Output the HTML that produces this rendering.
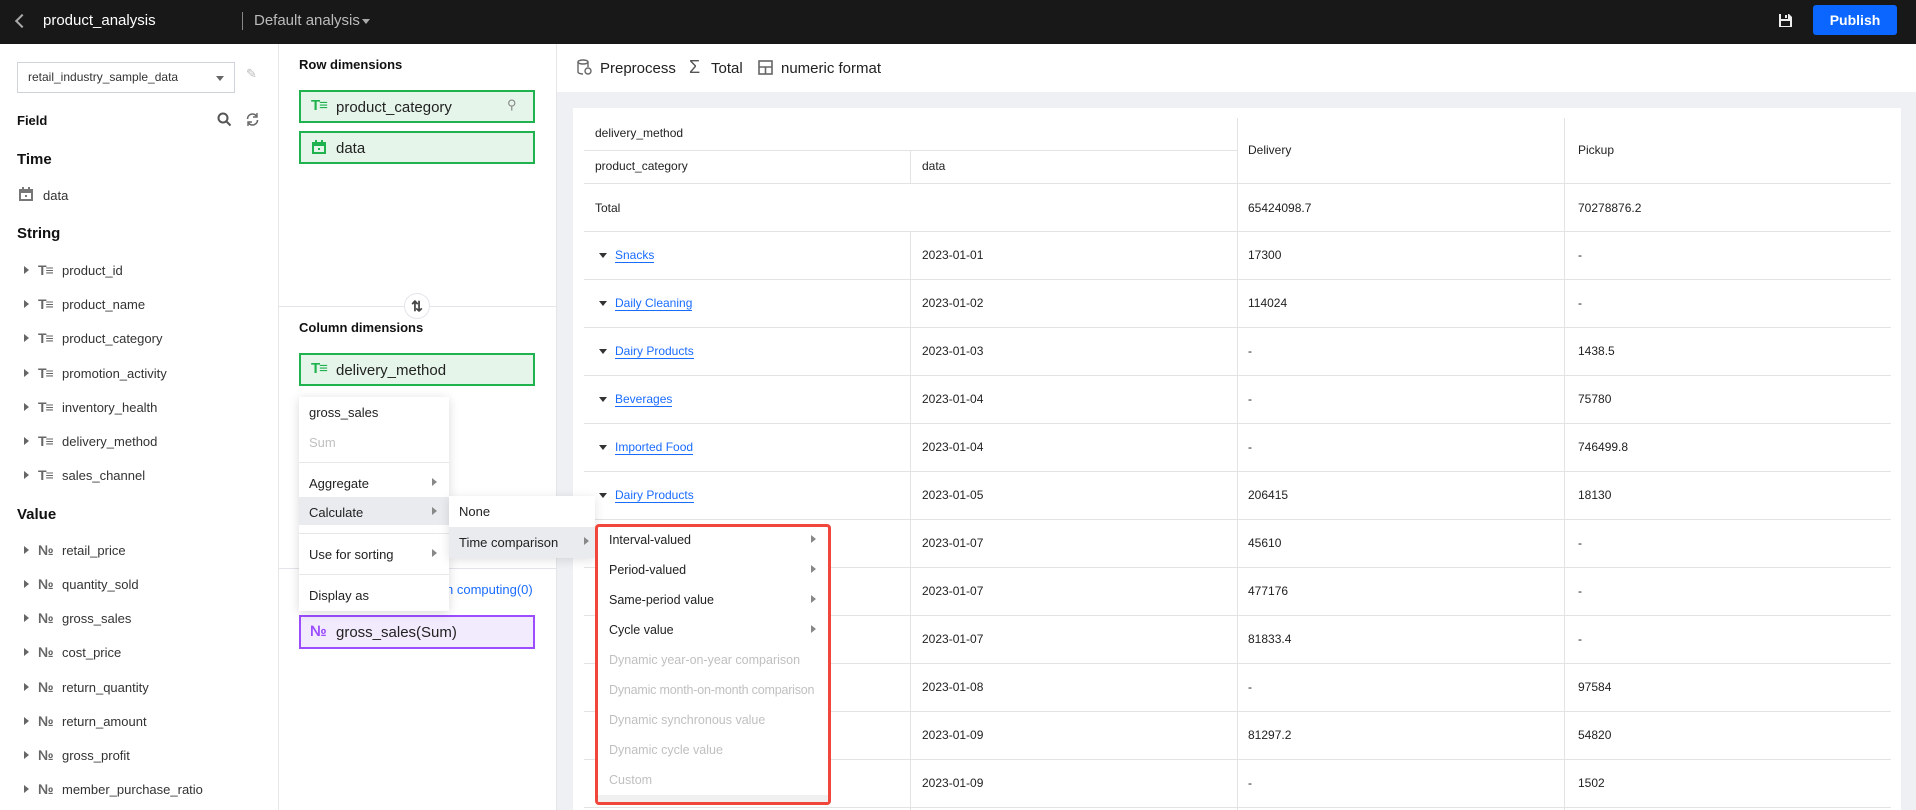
<!DOCTYPE html>
<html><head><meta charset="utf-8"><style>
*{box-sizing:border-box;margin:0;padding:0}
body{width:1916px;height:810px;overflow:hidden;background:#fff;font-family:"Liberation Sans",sans-serif;font-size:13px;color:#222;position:relative}
.a{position:absolute;white-space:nowrap}
.top{left:0;top:0;width:1916px;height:44px;background:#181818}
.h{font-weight:bold;font-size:15px;color:#111}
.fi{font-size:13px;color:#333}
.tri{display:block;width:0;height:0;border-left:5px solid #666;border-top:4px solid transparent;border-bottom:4px solid transparent}
.dn{display:block;width:0;height:0;border-top:5px solid #333;border-left:4px solid transparent;border-right:4px solid transparent}
.ti{font-weight:bold;color:#666;font-size:14px;letter-spacing:-1px}
.no{color:#666;font-size:14px;font-weight:bold}
.gbox{background:#e5f5ea;border:2px solid #1fb24f;height:33px}
.lnk{color:#1a6cff;border-bottom:1px solid #1a6cff;line-height:14px}
.mi{font-size:13px;color:#222}
.rb .mi{font-size:12.5px}
.dis{color:#c0c0c0}
.arr{display:block;width:0;height:0;border-left:5px solid #888;border-top:4px solid transparent;border-bottom:4px solid transparent}
</style></head><body>
<div class="a top"></div>
<div class="a" style="left:17px;top:16px;width:10px;height:10px;border-left:2px solid #aaa;border-bottom:2px solid #aaa;transform:rotate(45deg)"></div>
<div class="a" style="left:43px;top:12px;color:#fff;font-size:15px">product_analysis</div>
<div class="a" style="left:242px;top:12px;width:1px;height:18px;background:#888"></div>
<div class="a" style="left:254px;top:12px;color:#bbb;font-size:15px">Default analysis</div>
<div class="a" style="left:362px;top:19px;border-top:5px solid #aaa;border-left:4px solid transparent;border-right:4px solid transparent"></div>
<svg class="a" style="left:1778px;top:13px" width="15" height="15" viewBox="0 0 15 15"><path d="M1 1h10l3 3v10H1z" fill="#eee"/><rect x="3" y="1" width="7" height="5" fill="#181818"/><rect x="7" y="2" width="2" height="3" fill="#eee"/><rect x="3" y="8" width="9" height="5" fill="#181818"/></svg>
<div class="a" style="left:1813px;top:5px;width:84px;height:30px;background:#0a66ff;border-radius:3px;color:#fff;font-weight:bold;font-size:14px;text-align:center;line-height:30px">Publish</div>

<!-- left panel -->
<div class="a" style="left:278px;top:44px;width:1px;height:766px;background:#e6e6e6"></div>
<div class="a" style="left:17px;top:62px;width:218px;height:31px;border:1px solid #cfd3da"></div>
<div class="a fi" style="left:28px;top:70px;font-size:12px">retail_industry_sample_data</div>
<div class="a" style="left:216px;top:76px;border-top:5px solid #666;border-left:4px solid transparent;border-right:4px solid transparent"></div>
<div class="a" style="left:246px;top:66px;color:#bbb;font-size:13px">✎</div>
<div class="a h" style="left:17px;top:113px;font-size:13px">Field</div>
<svg class="a" style="left:217px;top:112px" width="15" height="15"><circle cx="6" cy="6" r="4.5" stroke="#555" stroke-width="2" fill="none"/><path d="M9.5 9.5l4 4" stroke="#555" stroke-width="2"/></svg>
<svg class="a" style="left:245px;top:112px" width="15" height="15"><path d="M2.5 7a5 5 0 0 1 9-3M12.5 8a5 5 0 0 1-9 3" stroke="#666" stroke-width="1.6" fill="none"/><path d="M12 1v4H8M3 14v-4h4" stroke="#666" stroke-width="1.4" fill="none"/></svg>
<div class="a h" style="left:17px;top:151px">Time</div>
<svg class="a" style="left:19px;top:187px" width="14" height="14"><rect x="1" y="3" width="12" height="10" fill="none" stroke="#777" stroke-width="2"/><rect x="1" y="3" width="12" height="3" fill="#777"/><rect x="3" y="0" width="2" height="3" fill="#777"/><rect x="9" y="0" width="2" height="3" fill="#777"/><rect x="6" y="8" width="2" height="2" fill="#777"/></svg>
<div class="a fi" style="left:43px;top:188px">data</div>
<div class="a h" style="left:17px;top:225px">String</div>

<div class="a" style="left:24px;top:266px"><span class="tri"></span></div><div class="a ti" style="left:38px;top:262px">T≡</div><div class="a fi" style="left:62px;top:263px">product_id</div>
<div class="a" style="left:24px;top:300px"><span class="tri"></span></div><div class="a ti" style="left:38px;top:296px">T≡</div><div class="a fi" style="left:62px;top:297px">product_name</div>
<div class="a" style="left:24px;top:334px"><span class="tri"></span></div><div class="a ti" style="left:38px;top:330px">T≡</div><div class="a fi" style="left:62px;top:331px">product_category</div>
<div class="a" style="left:24px;top:369px"><span class="tri"></span></div><div class="a ti" style="left:38px;top:365px">T≡</div><div class="a fi" style="left:62px;top:366px">promotion_activity</div>
<div class="a" style="left:24px;top:403px"><span class="tri"></span></div><div class="a ti" style="left:38px;top:399px">T≡</div><div class="a fi" style="left:62px;top:400px">inventory_health</div>
<div class="a" style="left:24px;top:437px"><span class="tri"></span></div><div class="a ti" style="left:38px;top:433px">T≡</div><div class="a fi" style="left:62px;top:434px">delivery_method</div>
<div class="a" style="left:24px;top:471px"><span class="tri"></span></div><div class="a ti" style="left:38px;top:467px">T≡</div><div class="a fi" style="left:62px;top:468px">sales_channel</div>
<div class="a h" style="left:17px;top:506px">Value</div>
<div class="a" style="left:24px;top:546px"><span class="tri"></span></div><div class="a no" style="left:38px;top:542px">№</div><div class="a fi" style="left:62px;top:543px">retail_price</div>
<div class="a" style="left:24px;top:580px"><span class="tri"></span></div><div class="a no" style="left:38px;top:576px">№</div><div class="a fi" style="left:62px;top:577px">quantity_sold</div>
<div class="a" style="left:24px;top:614px"><span class="tri"></span></div><div class="a no" style="left:38px;top:610px">№</div><div class="a fi" style="left:62px;top:611px">gross_sales</div>
<div class="a" style="left:24px;top:648px"><span class="tri"></span></div><div class="a no" style="left:38px;top:644px">№</div><div class="a fi" style="left:62px;top:645px">cost_price</div>
<div class="a" style="left:24px;top:683px"><span class="tri"></span></div><div class="a no" style="left:38px;top:679px">№</div><div class="a fi" style="left:62px;top:680px">return_quantity</div>
<div class="a" style="left:24px;top:717px"><span class="tri"></span></div><div class="a no" style="left:38px;top:713px">№</div><div class="a fi" style="left:62px;top:714px">return_amount</div>
<div class="a" style="left:24px;top:751px"><span class="tri"></span></div><div class="a no" style="left:38px;top:747px">№</div><div class="a fi" style="left:62px;top:748px">gross_profit</div>
<div class="a" style="left:24px;top:785px"><span class="tri"></span></div><div class="a no" style="left:38px;top:781px">№</div><div class="a fi" style="left:62px;top:782px">member_purchase_ratio</div>

<!-- middle panel -->
<div class="a" style="left:556px;top:44px;width:1px;height:766px;background:#e6e6e6"></div>
<div class="a h" style="left:299px;top:57px;font-size:13px">Row dimensions</div>
<div class="a gbox" style="left:299px;top:90px;width:236px"></div>
<div class="a" style="left:311px;top:97px;color:#1fb24f;font-weight:bold;font-size:15px;letter-spacing:-1px">T≡</div>
<div class="a" style="left:336px;top:99px;font-size:15px">product_category</div>
<div class="a" style="left:507px;top:97px;color:#888;font-size:13px">⚲</div>
<div class="a gbox" style="left:299px;top:131px;width:236px"></div>
<svg class="a" style="left:312px;top:140px" width="14" height="14"><rect x="1" y="3" width="12" height="10" fill="none" stroke="#1fb24f" stroke-width="2"/><rect x="1" y="3" width="12" height="3" fill="#1fb24f"/><rect x="3" y="0" width="2" height="3" fill="#1fb24f"/><rect x="9" y="0" width="2" height="3" fill="#1fb24f"/><rect x="6" y="8" width="2" height="2" fill="#1fb24f"/></svg>
<div class="a" style="left:336px;top:140px;font-size:15px">data</div>
<div class="a" style="left:279px;top:306px;width:277px;height:1px;background:#e3e5ea"></div>
<div class="a" style="left:404px;top:293px;width:26px;height:26px;border:1px solid #e3e5ea;border-radius:50%;background:#fff;text-align:center;line-height:24px;font-weight:bold;font-size:14px;color:#444">⇅</div>
<div class="a h" style="left:299px;top:320px;font-size:13px">Column dimensions</div>
<div class="a gbox" style="left:299px;top:353px;width:236px"></div>
<div class="a" style="left:311px;top:360px;color:#1fb24f;font-weight:bold;font-size:15px;letter-spacing:-1px">T≡</div>
<div class="a" style="left:336px;top:362px;font-size:15px">delivery_method</div>
<div class="a" style="left:279px;top:568px;width:277px;height:1px;background:#e3e5ea"></div>
<div class="a" style="left:420px;top:582px;color:#1a6cff;font-size:13px">Batch computing(0)</div>
<div class="a" style="left:299px;top:615px;width:236px;height:34px;background:#f2eafd;border:2px solid #9b4dff"></div>
<div class="a" style="left:310px;top:623px;color:#9b4dff;font-weight:bold;font-size:15px">№</div>
<div class="a" style="left:336px;top:624px;font-size:15px">gross_sales(Sum)</div>

<!-- right area -->
<div class="a" style="left:557px;top:92px;width:1359px;height:718px;background:#eef0f4"></div>
<svg class="a" style="left:577px;top:59px" width="15" height="17"><ellipse cx="6" cy="3" rx="5" ry="2" fill="none" stroke="#666" stroke-width="1.4"/><path d="M1 3v10c0 1 2 2 5 2M11 3v5" fill="none" stroke="#666" stroke-width="1.4"/><circle cx="11" cy="12" r="3" fill="none" stroke="#666" stroke-width="1.4"/></svg>
<div class="a" style="left:600px;top:60px;font-size:15px">Preprocess</div>
<div class="a" style="left:689px;top:57px;font-size:18px;color:#555">Σ</div>
<div class="a" style="left:711px;top:60px;font-size:15px">Total</div>
<svg class="a" style="left:758px;top:60px" width="15" height="15"><rect x="1" y="1" width="13" height="13" fill="none" stroke="#666" stroke-width="1.6"/><path d="M1 7h13M7.5 7v7" stroke="#666" stroke-width="1.6"/></svg>
<div class="a" style="left:781px;top:60px;font-size:15px">numeric format</div>

<div class="a" style="left:573px;top:108px;width:1328px;height:702px;background:#fff"></div>
<div class="a" style="left:584px;top:150px;width:653px;height:1px;background:#e3e3e3"></div>
<div class="a" style="left:1237px;top:118px;width:1px;height:692px;background:#e3e3e3"></div>
<div class="a" style="left:1564px;top:118px;width:1px;height:692px;background:#e3e3e3"></div>
<div class="a" style="left:910px;top:150px;width:1px;height:33px;background:#e3e3e3"></div>
<div class="a" style="left:910px;top:231px;width:1px;height:579px;background:#e3e3e3"></div>
<div class="a" style="left:584px;top:183px;width:1307px;height:1px;background:#e3e3e3"></div>
<div class="a" style="left:584px;top:231px;width:1307px;height:1px;background:#e3e3e3"></div>
<div class="a" style="left:584px;top:279px;width:1307px;height:1px;background:#e3e3e3"></div>
<div class="a" style="left:584px;top:327px;width:1307px;height:1px;background:#e3e3e3"></div>
<div class="a" style="left:584px;top:375px;width:1307px;height:1px;background:#e3e3e3"></div>
<div class="a" style="left:584px;top:423px;width:1307px;height:1px;background:#e3e3e3"></div>
<div class="a" style="left:584px;top:471px;width:1307px;height:1px;background:#e3e3e3"></div>
<div class="a" style="left:584px;top:519px;width:1307px;height:1px;background:#e3e3e3"></div>
<div class="a" style="left:584px;top:567px;width:1307px;height:1px;background:#e3e3e3"></div>
<div class="a" style="left:584px;top:615px;width:1307px;height:1px;background:#e3e3e3"></div>
<div class="a" style="left:584px;top:663px;width:1307px;height:1px;background:#e3e3e3"></div>
<div class="a" style="left:584px;top:711px;width:1307px;height:1px;background:#e3e3e3"></div>
<div class="a" style="left:584px;top:759px;width:1307px;height:1px;background:#e3e3e3"></div>
<div class="a" style="left:584px;top:807px;width:1307px;height:1px;background:#e3e3e3"></div>

<div class="a" style="left:595px;top:126px;font-size:12px">delivery_method</div>
<div class="a" style="left:595px;top:159px;font-size:12px">product_category</div>
<div class="a" style="left:922px;top:159px;font-size:12px">data</div>
<div class="a" style="left:1248px;top:143px;font-size:12px">Delivery</div>
<div class="a" style="left:1578px;top:143px;font-size:12px">Pickup</div>
<div class="a" style="left:595px;top:201px;font-size:12px">Total</div>
<div class="a" style="left:1248px;top:201px;font-size:12px">65424098.7</div>
<div class="a" style="left:1578px;top:201px;font-size:12px">70278876.2</div>

<div style="font-size:12px">
<div class="a" style="left:599px;top:253px"><span class="dn"></span></div><div class="a lnk" style="left:615px;top:248px">Snacks</div><div class="a" style="left:922px;top:248px">2023-01-01</div><div class="a" style="left:1248px;top:248px">17300</div><div class="a" style="left:1578px;top:248px">-</div>
<div class="a" style="left:599px;top:301px"><span class="dn"></span></div><div class="a lnk" style="left:615px;top:296px">Daily Cleaning</div><div class="a" style="left:922px;top:296px">2023-01-02</div><div class="a" style="left:1248px;top:296px">114024</div><div class="a" style="left:1578px;top:296px">-</div>
<div class="a" style="left:599px;top:349px"><span class="dn"></span></div><div class="a lnk" style="left:615px;top:344px">Dairy Products</div><div class="a" style="left:922px;top:344px">2023-01-03</div><div class="a" style="left:1248px;top:344px">-</div><div class="a" style="left:1578px;top:344px">1438.5</div>
<div class="a" style="left:599px;top:397px"><span class="dn"></span></div><div class="a lnk" style="left:615px;top:392px">Beverages</div><div class="a" style="left:922px;top:392px">2023-01-04</div><div class="a" style="left:1248px;top:392px">-</div><div class="a" style="left:1578px;top:392px">75780</div>
<div class="a" style="left:599px;top:445px"><span class="dn"></span></div><div class="a lnk" style="left:615px;top:440px">Imported Food</div><div class="a" style="left:922px;top:440px">2023-01-04</div><div class="a" style="left:1248px;top:440px">-</div><div class="a" style="left:1578px;top:440px">746499.8</div>
<div class="a" style="left:599px;top:493px"><span class="dn"></span></div><div class="a lnk" style="left:615px;top:488px">Dairy Products</div><div class="a" style="left:922px;top:488px">2023-01-05</div><div class="a" style="left:1248px;top:488px">206415</div><div class="a" style="left:1578px;top:488px">18130</div>
<div class="a" style="left:922px;top:536px">2023-01-07</div><div class="a" style="left:1248px;top:536px">45610</div><div class="a" style="left:1578px;top:536px">-</div>
<div class="a" style="left:922px;top:584px">2023-01-07</div><div class="a" style="left:1248px;top:584px">477176</div><div class="a" style="left:1578px;top:584px">-</div>
<div class="a" style="left:922px;top:632px">2023-01-07</div><div class="a" style="left:1248px;top:632px">81833.4</div><div class="a" style="left:1578px;top:632px">-</div>
<div class="a" style="left:922px;top:680px">2023-01-08</div><div class="a" style="left:1248px;top:680px">-</div><div class="a" style="left:1578px;top:680px">97584</div>
<div class="a" style="left:922px;top:728px">2023-01-09</div><div class="a" style="left:1248px;top:728px">81297.2</div><div class="a" style="left:1578px;top:728px">54820</div>
<div class="a" style="left:922px;top:776px">2023-01-09</div><div class="a" style="left:1248px;top:776px">-</div><div class="a" style="left:1578px;top:776px">1502</div>
</div>

<!-- context menu -->
<div class="a" style="left:299px;top:397px;width:150px;height:214px;background:#fff;box-shadow:0 2px 10px rgba(0,0,0,.15)"></div>
<div class="a mi" style="left:309px;top:405px">gross_sales</div>
<div class="a mi dis" style="left:309px;top:435px">Sum</div>
<div class="a" style="left:299px;top:462px;width:150px;height:1px;background:#e8e8e8"></div>
<div class="a mi" style="left:309px;top:476px">Aggregate</div><div class="a" style="left:432px;top:478px"><span class="arr"></span></div>
<div class="a" style="left:299px;top:497px;width:150px;height:28px;background:#e9ebef"></div>
<div class="a mi" style="left:309px;top:505px">Calculate</div><div class="a" style="left:432px;top:507px"><span class="arr"></span></div>
<div class="a" style="left:299px;top:533px;width:150px;height:1px;background:#e8e8e8"></div>
<div class="a mi" style="left:309px;top:547px">Use for sorting</div><div class="a" style="left:432px;top:549px"><span class="arr"></span></div>
<div class="a" style="left:299px;top:574px;width:150px;height:1px;background:#e8e8e8"></div>
<div class="a mi" style="left:309px;top:588px">Display as</div>

<div class="a" style="left:449px;top:496px;width:146px;height:62px;background:#fff;box-shadow:0 2px 10px rgba(0,0,0,.12)"></div>
<div class="a mi" style="left:459px;top:504px">None</div>
<div class="a" style="left:449px;top:527px;width:146px;height:31px;background:#e9ebef"></div>
<div class="a mi" style="left:459px;top:535px">Time comparison</div><div class="a" style="left:584px;top:537px"><span class="arr"></span></div>

<div class="rb">
<div class="a" style="left:595px;top:524px;width:236px;height:281px;background:#fff;border:3px solid #f0463c;border-radius:4px;overflow:hidden"><div style="position:absolute;left:0;right:0;bottom:0;height:7px;background:#f0f0f0"></div></div>
<div class="a mi" style="left:609px;top:533px">Interval-valued</div><div class="a" style="left:811px;top:535px"><span class="arr"></span></div>
<div class="a mi" style="left:609px;top:563px">Period-valued</div><div class="a" style="left:811px;top:565px"><span class="arr"></span></div>
<div class="a mi" style="left:609px;top:593px">Same-period value</div><div class="a" style="left:811px;top:595px"><span class="arr"></span></div>
<div class="a mi" style="left:609px;top:623px">Cycle value</div><div class="a" style="left:811px;top:625px"><span class="arr"></span></div>
<div class="a mi dis" style="left:609px;top:653px">Dynamic year-on-year comparison</div>
<div class="a mi dis" style="left:609px;top:683px;letter-spacing:-0.2px">Dynamic month-on-month comparison</div>
<div class="a mi dis" style="left:609px;top:713px">Dynamic synchronous value</div>
<div class="a mi dis" style="left:609px;top:743px">Dynamic cycle value</div>
<div class="a mi dis" style="left:609px;top:773px">Custom</div>
</div>
</body></html>
